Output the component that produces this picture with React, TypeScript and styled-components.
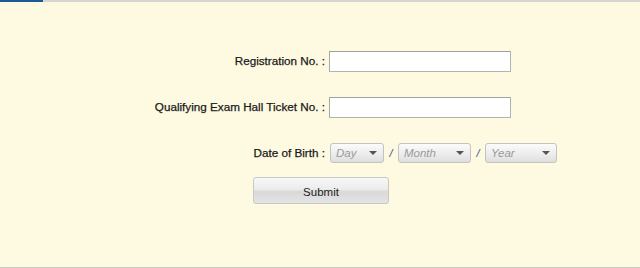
import styled, { createGlobalStyle } from 'styled-components';

const GlobalStyle = createGlobalStyle`
  html, body {
    margin: 0;
    padding: 0;
    background: #fef9e1;
  }
  body {
    font-family: 'Liberation Sans', Arial, sans-serif;
  }
`;

const Page = styled.div`
  width: 640px;
  height: 268px;
  box-sizing: border-box;
  background: #fef9e1;
  border-bottom: 1px solid #c9c9c4;
  display: flex;
  flex-direction: column;
`;

const TopBar = styled.div`
  display: flex;
  height: 2px;
  flex-shrink: 0;
`;

const TopTab = styled.div`
  width: 43px;
  background: #1c5a97;
`;

const TopRule = styled.div`
  flex: 1;
  background: #d6d6d2;
`;

const Form = styled.div`
  display: grid;
  grid-template-columns: 325px auto;
  column-gap: 4px;
  row-gap: 25px;
  align-items: center;
  padding-top: 49px;
`;

const Label = styled.label`
  text-align: right;
  font-size: 11.7px;
  line-height: 14px;
  margin-top: -1px;
  color: #1a1a1a;
  -webkit-text-stroke: 0.25px #1a1a1a;
`;

const TextInput = styled.input`
  width: 182px;
  height: 21px;
  box-sizing: border-box;
  margin: 0;
  background: #fff;
  border: 1px solid #b4b4ae;
  border-top-color: #a2a29c;
  border-left-color: #a8a8a2;
  outline: none;
`;

const DateGroup = styled.div`
  display: flex;
  align-items: center;
  padding-left: 1px;
`;

const SelectBox = styled.div<{ $w: number }>`
  width: ${(p) => p.$w}px;
  height: 20px;
  box-sizing: border-box;
  display: flex;
  align-items: center;
  justify-content: space-between;
  padding: 0 6px 0 5px;
  border: 1px solid #c4c4be;
  border-radius: 3px;
  background: linear-gradient(#fbfbfb, #ededed 55%, #dedede);
  font-size: 11.5px;
  font-style: italic;
  color: #9a9a9a;
`;

const Arrow = styled.span`
  width: 0;
  height: 0;
  border-left: 4px solid transparent;
  border-right: 4px solid transparent;
  border-top: 4px solid #555;
`;

const Slash = styled.span`
  width: 14px;
  text-align: center;
  font-size: 11px;
  font-style: italic;
  color: #2a4a8a;
`;

const ButtonRow = styled.div`
  display: flex;
  padding: 14px 0 0 253px;
`;

const Button = styled.button`
  width: 136px;
  height: 27px;
  margin: 0;
  border: 1px solid #c8c8c4;
  border-radius: 3px;
  background: linear-gradient(#f7f7f7, #ececec 45%, #d9d9d9 55%, #e4e4e4);
  font-family: 'Liberation Sans', Arial, sans-serif;
  font-size: 11.5px;
  color: #222;
  padding: 2px 0 0;
`;

export default function App() {
  return (
    <>
      <GlobalStyle />
      <Page>
        <TopBar>
          <TopTab />
          <TopRule />
        </TopBar>
        <Form>
          <Label>Registration No. :</Label>
          <TextInput />
          <Label>Qualifying Exam Hall Ticket No. :</Label>
          <TextInput />
          <Label>Date of Birth :</Label>
          <DateGroup>
            <SelectBox $w={54}>
              Day
              <Arrow />
            </SelectBox>
            <Slash>/</Slash>
            <SelectBox $w={73}>
              Month
              <Arrow />
            </SelectBox>
            <Slash>/</Slash>
            <SelectBox $w={72}>
              Year
              <Arrow />
            </SelectBox>
          </DateGroup>
        </Form>
        <ButtonRow>
          <Button>Submit</Button>
        </ButtonRow>
      </Page>
    </>
  );
}
